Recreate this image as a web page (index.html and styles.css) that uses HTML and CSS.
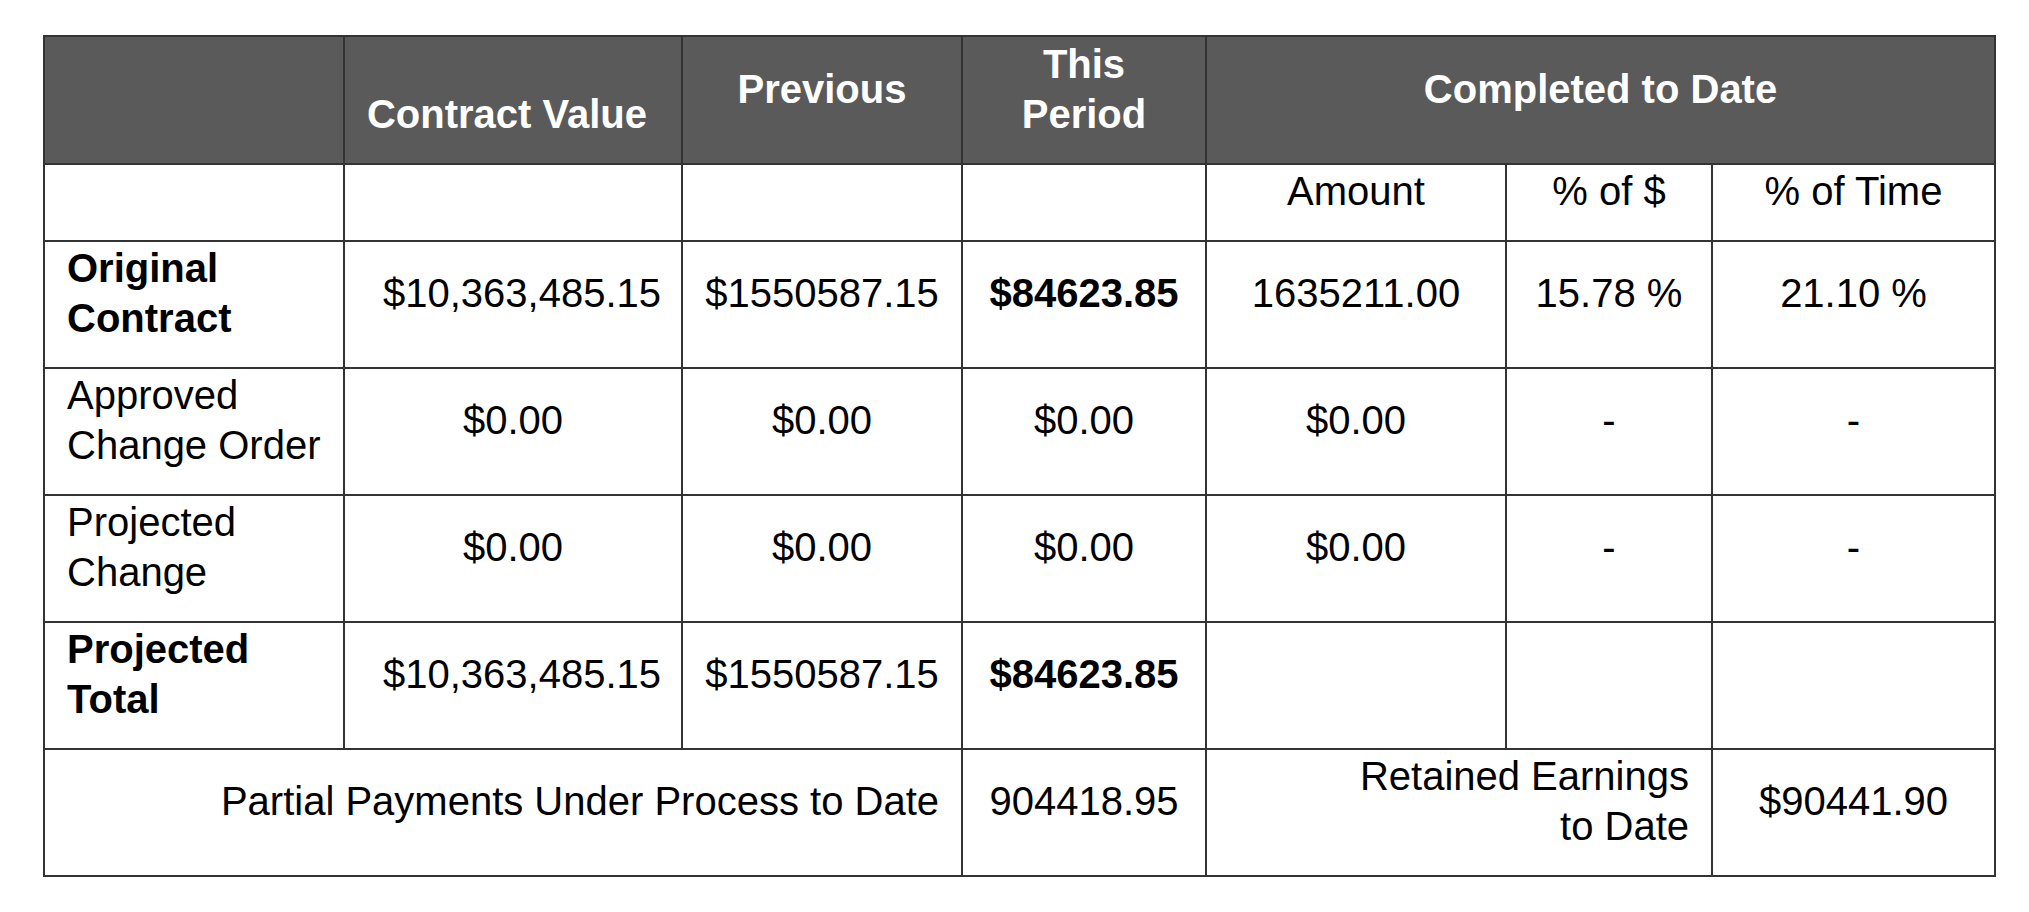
FILE: index.html
```html
<!DOCTYPE html>
<html lang="en">
<head>
<meta charset="utf-8">
<title>Contract Summary</title>
<link rel="stylesheet" href="styles.css">
</head>
<body>
<table class="summary">
  <colgroup>
    <col class="c1"><col class="c2"><col class="c3"><col class="c4"><col class="c5"><col class="c6"><col class="c7">
  </colgroup>
  <thead>
    <tr class="head">
      <th></th>
      <th class="bottom">Contract Value</th>
      <th>Previous</th>
      <th>This<br>Period</th>
      <th colspan="3">Completed to Date</th>
    </tr>
  </thead>
  <tbody>
    <tr class="sub">
      <td></td><td></td><td></td><td></td>
      <td>Amount</td>
      <td>% of $</td>
      <td>% of Time</td>
    </tr>
    <tr>
      <td class="label strong">Original Contract</td>
      <td class="long">$10,363,485.15</td>
      <td>$1550587.15</td>
      <td class="strong">$84623.85</td>
      <td>1635211.00</td>
      <td>15.78 %</td>
      <td>21.10 %</td>
    </tr>
    <tr>
      <td class="label">Approved Change Order</td>
      <td>$0.00</td>
      <td>$0.00</td>
      <td>$0.00</td>
      <td>$0.00</td>
      <td>-</td>
      <td>-</td>
    </tr>
    <tr>
      <td class="label">Projected Change</td>
      <td>$0.00</td>
      <td>$0.00</td>
      <td>$0.00</td>
      <td>$0.00</td>
      <td>-</td>
      <td>-</td>
    </tr>
    <tr>
      <td class="label strong">Projected Total</td>
      <td class="long">$10,363,485.15</td>
      <td>$1550587.15</td>
      <td class="strong">$84623.85</td>
      <td></td>
      <td></td>
      <td></td>
    </tr>
    <tr>
      <td colspan="3" class="right">Partial Payments Under Process to Date</td>
      <td>904418.95</td>
      <td colspan="2" class="right">Retained Earnings<br>to Date</td>
      <td>$90441.90</td>
    </tr>
  </tbody>
</table>
</body>
</html>
```

FILE: styles.css
```css
html, body {
  margin: 0;
  padding: 0;
  background: #ffffff;
}

body {
  padding: 35px 0 0 43px;
  font-family: "Liberation Sans", Arial, sans-serif;
  color: #000000;
}

.summary {
  border-collapse: collapse;
  table-layout: fixed;
  width: 1953px;
  font-size: 40px;
  line-height: 50px;
}

.c1 { width: 300px; }
.c2 { width: 338px; }
.c3 { width: 280px; }
.c4 { width: 244px; }
.c5 { width: 300px; }
.c6 { width: 206px; }
.c7 { width: 283px; }

.summary th,
.summary td {
  border: 2px solid #333333;
  padding: 1px 22px 24px;
  text-align: center;
  vertical-align: middle;
  font-weight: normal;
}

.head th {
  background: #5a5a5a;
  color: #ffffff;
  font-weight: bold;
  padding-top: 2px;
}

.head th.bottom {
  vertical-align: bottom;
  padding-left: 16px;
  padding-right: 28px;
}

.summary td.label {
  text-align: left;
  padding-right: 6px;
}

.summary td.strong {
  font-weight: bold;
}

.summary td.long {
  padding-left: 30px;
  padding-right: 12px;
}

.summary td.right {
  text-align: right;
}
```
